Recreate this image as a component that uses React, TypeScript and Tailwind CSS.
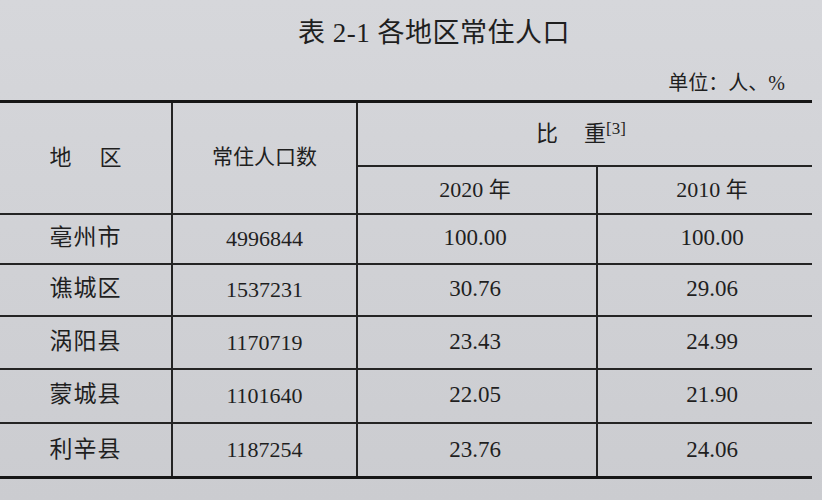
const serif = 'font-["Liberation_Serif","Noto_Sans_CJK_SC",serif]'

const rows = [
  { name: '亳州市', pop: '4996844', y2020: '100.00', y2010: '100.00', h: 'h-[50px]' },
  { name: '谯城区', pop: '1537231', y2020: '30.76', y2010: '29.06', h: 'h-[52px]' },
  { name: '涡阳县', pop: '1170719', y2020: '23.43', y2010: '24.99', h: 'h-[53px]' },
  { name: '蒙城县', pop: '1101640', y2020: '22.05', y2010: '21.90', h: 'h-[54px]' },
  { name: '利辛县', pop: '1187254', y2020: '23.76', y2010: '24.06', h: 'h-[55px]' },
]

export default function App() {
  return (
    <div className={`w-[822px] h-[500px] overflow-hidden bg-gradient-to-b from-[#d6d7db] to-[#cbccd0] text-[#1f1f1f] ${serif}`}>
      <div className="h-[66px] flex items-center justify-center pl-[46px] text-[27px] tracking-[0.5px]">
        表 2-1 各地区常住人口
      </div>
      <div className="h-[34px] flex items-center justify-end pr-[37px] text-[20px]">
        单位：人、%
      </div>

      <table className="table-fixed border-collapse w-[812px] border-t-[3px] border-b-[3px] border-[#161616]">
        <colgroup>
          <col className="w-[172px]" />
          <col className="w-[185px]" />
          <col className="w-[240px]" />
          <col />
        </colgroup>
        <thead>
          <tr className="h-[64px]">
            <td rowSpan={2} className="text-center text-[22px] border-r-2 border-b-2 border-[#242424]">
              地<span className="inline-block w-[28px]" />区
            </td>
            <td rowSpan={2} className="text-center text-[21px] border-r-2 border-b-2 border-[#242424]">
              常住人口数
            </td>
            <td colSpan={2} className="text-center text-[22px] border-b-2 border-[#242424] pr-[8px]">
              比<span className="inline-block w-[26px]" />重<span className="relative top-[-7px] text-[17px]">[3]</span>
            </td>
          </tr>
          <tr className="h-[48px]">
            <td className="text-center text-[22px] border-r-2 border-b-2 border-[#242424] pr-[4px]">2020 年</td>
            <td className="text-center text-[22px] border-b-2 border-[#242424] pl-[14px]">2010 年</td>
          </tr>
        </thead>
        <tbody>
          {rows.map((r, i) => (
            <tr key={r.name} className={`${r.h} ${i < rows.length - 1 ? 'border-b-2 border-[#242424]' : ''}`}>
              <td className="text-center text-[23px] border-r-2 border-[#242424] tracking-[1px]">{r.name}</td>
              <td className="text-center text-[22px] border-r-2 border-[#242424]">{r.pop}</td>
              <td className="text-center text-[23px] border-r-2 border-[#242424] pr-[4px]">{r.y2020}</td>
              <td className="text-center text-[23px] pl-[14px]">{r.y2010}</td>
            </tr>
          ))}
        </tbody>
      </table>
    </div>
  )
}
